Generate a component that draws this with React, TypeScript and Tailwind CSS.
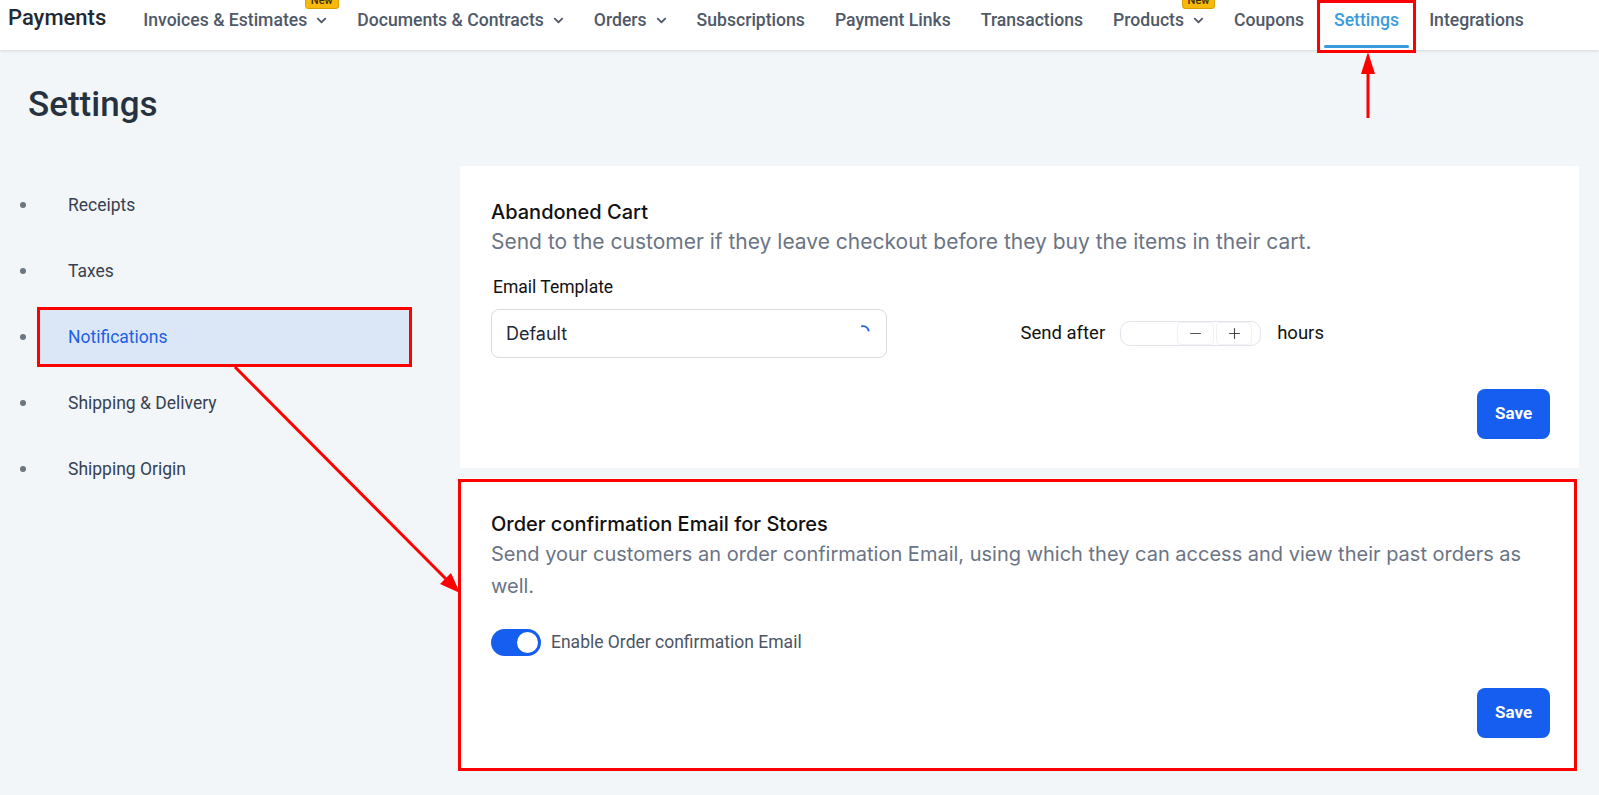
import { FaChevronDown } from "react-icons/fa";
import { Minus, Plus } from "lucide-react";

const navItems = [
  { label: "Invoices & Estimates", chevron: true, badge: true },
  { label: "Documents & Contracts", chevron: true },
  { label: "Orders", chevron: true },
  { label: "Subscriptions" },
  { label: "Payment Links" },
  { label: "Transactions" },
  { label: "Products", chevron: true, badge: true },
  { label: "Coupons" },
  { label: "Settings", active: true },
  { label: "Integrations" },
];

const sideItems = ["Receipts", "Taxes", "Notifications", "Shipping & Delivery", "Shipping Origin"];

function SaveButton() {
  return (
    <div className="flex justify-end">
      <button className="w-[73px] h-[50px] rounded-[8px] bg-[#155eef] text-white text-[17px] font-bold font-['Roboto',sans-serif]">
        Save
      </button>
    </div>
  );
}

export default function App() {
  return (
    <div className="relative min-h-screen bg-[#f2f6f9] font-['Roboto',sans-serif] overflow-hidden">
      {/* top navigation */}
      <header className="h-[50px] bg-white shadow-[0_1px_3px_rgba(0,0,0,0.12)] flex items-center relative z-10">
        <div className="pl-[8px] pr-[27px] text-[22px] font-medium text-[#1f2937] -mt-[15px]">Payments</div>
        <nav className="flex items-stretch h-full gap-[10px]">
          {navItems.map((item) => (
            <div
              key={item.label}
              className={`relative flex items-center px-[10px] text-[17.6px] font-medium ${
                item.active ? "text-[#3a9bdc]" : "text-[#4f5968]"
              }`}
            >
              <span className="-mt-[10px]">{item.label}</span>
              {item.chevron && (
                <span className="relative ml-[9px] -mt-[10px]">
                  <FaChevronDown className="w-[11px] h-[11px]" />
                  {item.badge && (
                    <span className="absolute left-1/2 -translate-x-1/2 top-[-23px] h-[17px] px-[5px] rounded-[3px] bg-[#f9b90b] border border-[#d99f00] text-[11px] leading-[15px] font-medium text-[#3a2f10]">
                      New
                    </span>
                  )}
                </span>
              )}
              {item.active && (
                <>
                  <span className="absolute left-0 right-0 top-[45px] h-[3px] bg-[#3a9bdc] rounded-full" />
                  <span className="absolute left-[-7px] right-[-7px] top-0 h-[53px] border-[3px] border-[#ff0000]" />
                </>
              )}
            </div>
          ))}
        </nav>
      </header>

      <main>
        <h1 className="pl-[28px] pt-[34px] text-[35px] leading-[42px] font-medium text-[#273240]">Settings</h1>

        <div className="flex mt-[40px]">
          {/* sidebar */}
          <ul className="w-[460px] pt-[11px] flex flex-col gap-[10px]">
            {sideItems.map((s) => {
              const active = s === "Notifications";
              return (
                <li key={s} className="flex items-center">
                  <span className="w-[40px] flex">
                    <span className="ml-[20px] w-[6px] h-[6px] rounded-full bg-[#6b7680]" />
                  </span>
                  <span
                    className={`relative w-[369px] h-[56px] pl-[28px] flex items-center text-[17.5px] ${
                      active ? "bg-[#dbe7f7] text-[#1d5fe6]" : "text-[#374151]"
                    }`}
                  >
                    {s}
                    {active && (
                      <span className="absolute left-[-3px] right-[-3px] top-[-2px] bottom-[-2px] border-[3px] border-[#ff0000]" />
                    )}
                  </span>
                </li>
              );
            })}
          </ul>

          {/* content */}
          <div className="flex-1 mr-[20px] flex flex-col gap-[10px]">
            <section className="bg-white pt-[32px] pb-[29px] pl-[31px] pr-[29px]">
              <h2 className="text-[20px] leading-[28px] font-medium text-[#111] font-['Inter',sans-serif]">Abandoned Cart</h2>
              <p className="text-[21px] leading-[32px] text-[#6b7484] font-['Inter',sans-serif]">
                Send to the customer if they leave checkout before they buy the items in their cart.
              </p>
              <div className="grid grid-cols-2 mt-[17px] items-end">
                <div>
                  <div className="pl-[2px] text-[17.5px] leading-[24px] text-[#111]">Email Template</div>
                  <div className="mt-[10px] w-[396px] h-[49px] rounded-[8px] border border-[#d9dce3] pl-[14px] pr-[14px] flex items-center justify-between">
                    <span className="text-[18px] text-[#1f2937] font-['Inter',sans-serif]">Default</span>
                    <svg width="16" height="16" viewBox="0 0 16 16" className="-mt-[3px]">
                      <path d="M6 2.2 A6 6 0 0 1 12.6 6.5" fill="none" stroke="#2563eb" strokeWidth="2" strokeLinecap="round" />
                    </svg>
                  </div>
                </div>
                <div className="h-[49px] flex items-center">
                  <span className="text-[18.5px] text-[#111]">Send after</span>
                  <div className="ml-[15px] w-[141px] h-[25px] rounded-[10px] border border-[#e1e4ea] flex items-center pr-[8px]">
                    <div className="w-[56px]" />
                    <div className="w-[37px] h-[23px] border border-[#f1f2f5] rounded-[4px] flex items-center justify-center text-[#555]">
                      <Minus className="w-[17px] h-[17px]" strokeWidth={1.5} />
                    </div>
                    <div className="ml-[2px] w-[36px] h-[23px] border border-[#f1f2f5] rounded-[4px] flex items-center justify-center text-[#444]">
                      <Plus className="w-[17px] h-[17px]" strokeWidth={1.5} />
                    </div>
                  </div>
                  <span className="ml-[16px] text-[18.5px] text-[#111]">hours</span>
                </div>
              </div>
              <div className="mt-[31px]">
                <SaveButton />
              </div>
            </section>

            <section className="relative bg-white pt-[32px] pb-[31px] pl-[31px] pr-[29px]">
              <h2 className="text-[20px] leading-[28px] font-medium text-[#111] font-['Inter',sans-serif]">
                Order confirmation Email for Stores
              </h2>
              <p className="max-w-[1050px] text-[20px] leading-[32px] text-[#6b7484] font-['Inter',sans-serif]">
                Send your customers an order confirmation Email, using which they can access and view their past orders as well.
              </p>
              <div className="mt-[27px] flex items-center">
                <span className="w-[50px] h-[27px] rounded-full bg-[#155eef] flex items-center justify-end pr-[1px]">
                  <span className="w-[25px] h-[25px] rounded-full bg-white border-2 border-[#155eef]" />
                </span>
                <span className="ml-[10px] text-[17.5px] text-[#4b5563]">Enable Order confirmation Email</span>
              </div>
              <div className="mt-[32px]">
                <SaveButton />
              </div>
              <span className="absolute left-[-2px] top-[1px] right-[2px] bottom-[-2px] border-[3px] border-[#ff0000] pointer-events-none" />
            </section>
          </div>
        </div>
      </main>

      {/* annotation arrows */}
      <svg className="absolute inset-0 pointer-events-none" width="1599" height="795">
        <line x1="1368" y1="118" x2="1368" y2="70" stroke="#ff0000" strokeWidth="3" />
        <polygon points="1368,52 1361,74 1375,74" fill="#ff0000" />
        <line x1="235" y1="367" x2="449" y2="582" stroke="#ff0000" strokeWidth="3" />
        <polygon points="460,593 440,584 451,573" fill="#ff0000" />
      </svg>
    </div>
  );
}
